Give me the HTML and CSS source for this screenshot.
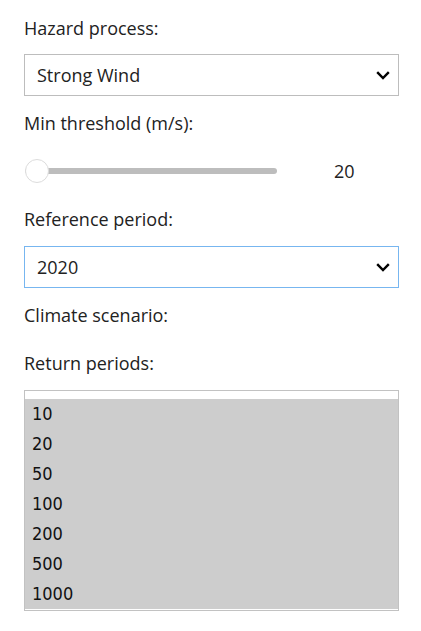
FILE: index.html
```html
<!DOCTYPE html>
<html lang="en">
<head>
<meta charset="utf-8">
<title>Hazard settings</title>
<link rel="stylesheet" href="styles.css">
</head>
<body>
<div class="panel">
  <div class="label first">Hazard process:</div>
  <div class="select">
    <span class="select-value">Strong Wind</span>
    <svg class="chev" width="14" height="9" viewBox="0 0 14 9"><path d="M1.2 1.2 L7 7 L12.8 1.2" fill="none" stroke="#000" stroke-width="2.4"/></svg>
  </div>

  <div class="label">Min threshold (m/s):</div>
  <div class="slider-row">
    <input class="range" type="range" min="20" max="60" value="20">
    <span class="slider-value">20</span>
  </div>

  <div class="label">Reference period:</div>
  <div class="select focused">
    <span class="select-value">2020</span>
    <svg class="chev" width="14" height="9" viewBox="0 0 14 9"><path d="M1.2 1.2 L7 7 L12.8 1.2" fill="none" stroke="#000" stroke-width="2.4"/></svg>
  </div>

  <div class="label empty">Climate scenario:</div>

  <div class="label">Return periods:</div>
  <div class="listbox">
    <div class="option">10</div>
    <div class="option">20</div>
    <div class="option">50</div>
    <div class="option">100</div>
    <div class="option">200</div>
    <div class="option">500</div>
    <div class="option">1000</div>
  </div>
</div>
</body>
</html>
```

FILE: styles.css
```css
html, body {
  margin: 0;
  padding: 0;
  background: #fff;
}

body {
  font-family: "Open Sans", "Noto Sans", sans-serif;
  color: #222;
}

.panel {
  width: 375px;
  padding: 16px 0 0 24px;
  display: flex;
  flex-direction: column;
}

.label {
  font-size: 18px;
  line-height: 24px;
  margin-top: 15px;
  margin-bottom: 15px;
}

.label.first {
  margin-top: 0;
  margin-bottom: 14px;
}

.label.empty {
  margin-bottom: 9px;
}

.select {
  box-sizing: border-box;
  height: 42px;
  border: 1px solid #bdbdbd;
  display: flex;
  align-items: center;
  justify-content: space-between;
  padding: 0 8px 0 12px;
  font-size: 18px;
}

.select.focused {
  border-color: #77b6f0;
}

.chev {
  display: block;
}

.slider-row {
  display: flex;
  align-items: center;
  height: 24px;
  margin-top: 9px;
  margin-bottom: 9px;
}

.range {
  -webkit-appearance: none;
  appearance: none;
  width: 252px;
  height: 24px;
  margin: 0 0 0 1px;
  padding: 0;
  background: transparent;
}

.range::-webkit-slider-runnable-track {
  height: 6px;
  border-radius: 3px;
  background: #bdbdbd;
}

.range::-webkit-slider-thumb {
  -webkit-appearance: none;
  appearance: none;
  width: 24px;
  height: 24px;
  margin-top: -9px;
  border-radius: 50%;
  background: #fff;
  border: 1px solid #dcdcdc;
  box-sizing: border-box;
}

.slider-value {
  font-size: 18px;
  margin-left: 57px;
}

.listbox {
  box-sizing: border-box;
  border: 1px solid #c2c2c2;
  padding-top: 8px;
  padding-bottom: 1px;
}

.option {
  background: #cdcdcd;
  font-family: "DejaVu Sans Condensed", "DejaVu Sans", Verdana, sans-serif;
  font-stretch: condensed;
  font-size: 18px;
  height: 30px;
  line-height: 30px;
  padding-left: 7px;
  color: #111;
}
```
